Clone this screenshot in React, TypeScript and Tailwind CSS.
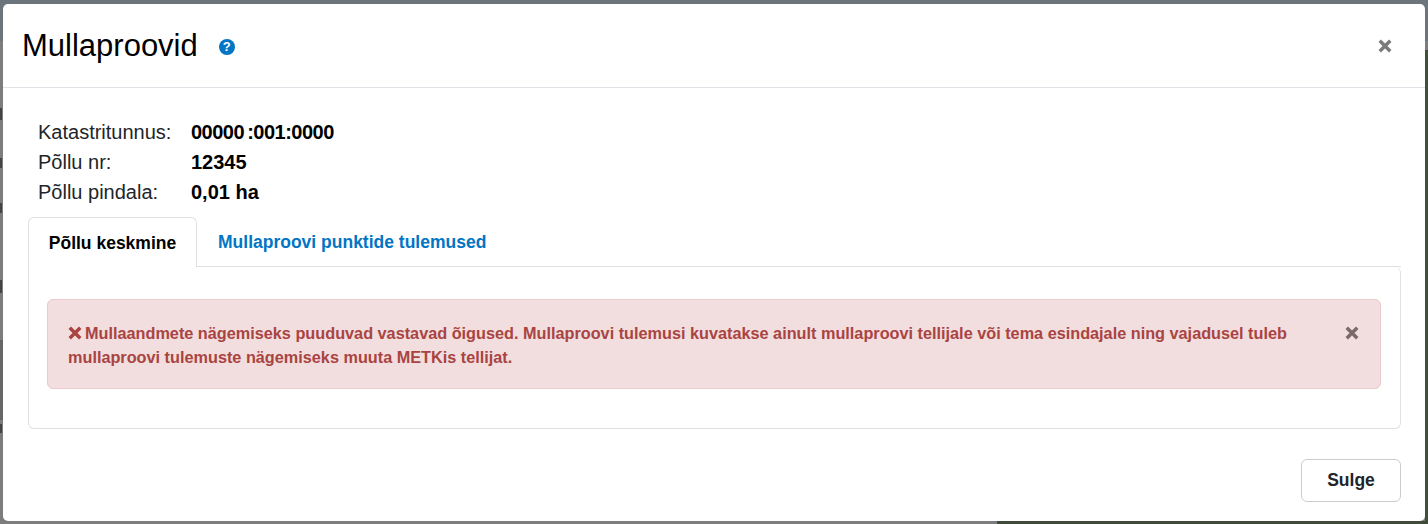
function CloseIcon({ className }: { className: string }) {
  return (
    <svg viewBox="0 0 12 12" className={className} fill="none" stroke="currentColor" strokeWidth="3">
      <path d="M1.5 1.5 10.5 10.5M10.5 1.5 1.5 10.5" />
    </svg>
  );
}

function InfoRow({ label, children }: { label: string; children: React.ReactNode }) {
  return (
    <div className="flex h-[30px] items-center">
      <div className="w-[153px] text-[20px] text-[#212529]">{label}</div>
      <div className="text-[20px] font-bold text-black">{children}</div>
    </div>
  );
}

export default function App() {
  return (
    <div className="relative h-[524px] w-[1428px] overflow-hidden bg-[#7d7d7d] pt-[4px] pr-[3px] pb-[3px] pl-[3px] font-['Liberation_Sans',Arial,sans-serif]">
      {/* dimmed page behind the modal */}
      <div className="absolute inset-x-0 top-0 h-[41px] bg-[#6c757b]" />
      <div className="absolute top-[50px] right-0 bottom-0 w-[3px] bg-[#3f5239]" />
      <div className="absolute right-0 bottom-0 h-[3px] w-[431px] bg-[#3f4a38]" />
      <div className="absolute top-[340px] left-0 h-[80px] w-[3px] bg-[#666666]" />
      <div className="absolute top-[108px] left-0 h-[12px] w-[2px] bg-[#444444]" />
      <div className="absolute top-[158px] left-0 h-[10px] w-[2px] bg-[#444444]" />
      <div className="absolute top-[203px] left-0 h-[10px] w-[2px] bg-[#444444]" />
      <div className="absolute top-[280px] left-0 h-[13px] w-[2px] bg-[#444444]" />
      <div className="absolute top-[424px] left-0 h-[9px] w-[2px] bg-[#444444]" />

      <div className="relative flex h-[517px] flex-col rounded-[5px] bg-white">
        <div className="flex h-[84px] shrink-0 items-center justify-between border-b border-[#dee2e6] pr-[33px] pl-[19px]">
          <div className="flex items-center">
            <h1 className="text-[31px] leading-none text-black">Mullaproovid</h1>
            <span className="mt-[2px] ml-[21px] flex h-[16px] w-[16px] items-center justify-center rounded-full bg-[#0275c4] text-[13px] font-bold text-white">?</span>
          </div>
          <CloseIcon className="h-[14px] w-[14px] text-[#7b7b7b]" />
        </div>

        <div className="flex flex-1 flex-col pt-[29px] pr-[24px] pl-[25px]">
          <div className="pl-[10px]">
            <InfoRow label="Katastritunnus:">
              <span className="tracking-[-0.5px]">00000<span className="ml-[3px]">:001:0000</span></span>
            </InfoRow>
            <InfoRow label="Põllu nr:">12345</InfoRow>
            <InfoRow label="Põllu pindala:">0,01 ha</InfoRow>
          </div>

          <div className="mt-[10px] flex h-[50px]">
            <div className="relative z-10 flex h-[50px] w-[169px] items-center justify-center rounded-t-[6px] border border-b-0 border-[#dee2e6] bg-white pt-[1px] text-[17.5px] font-bold text-black">
              Põllu keskmine
            </div>
            <div className="flex flex-1 items-center border-b border-[#dee2e6] pt-[1px] pl-[21px] text-[17.5px] font-bold text-[#0275c4]">
              Mullaproovi punktide tulemused
            </div>
          </div>

          <div className="h-[162px] rounded-b-[6px] rounded-tr-[6px] border border-t-0 border-[#dee2e6] pt-[32px] pr-[19px] pl-[18px]">
            <div className="flex h-[90px] justify-between rounded-[6px] border border-[#ecc9cd] bg-[#f2dede] pt-[21px] pr-[21px] pl-[20px] text-[16.25px] leading-[24px] font-bold text-[#a94442]">
              <p className="w-[1240px]">
                <CloseIcon className="mr-[3px] mb-[4px] inline h-[14px] w-[14px]" />
                Mullaandmete nägemiseks puuduvad vastavad õigused. Mullaproovi tulemusi kuvatakse ainult mullaproovi tellijale või tema esindajale ning vajadusel tuleb mullaproovi tulemuste nägemiseks muuta METKis tellijat.
              </p>
              <CloseIcon className="mt-[5px] h-[14px] w-[14px] text-[#7b6a6a]" />
            </div>
          </div>

          <div className="mt-[30px] flex justify-end">
            <button className="h-[43px] w-[100px] rounded-[6px] border border-[#cccccc] bg-white text-[17.5px] font-bold text-[#212529]">
              Sulge
            </button>
          </div>
        </div>
      </div>
    </div>
  );
}
